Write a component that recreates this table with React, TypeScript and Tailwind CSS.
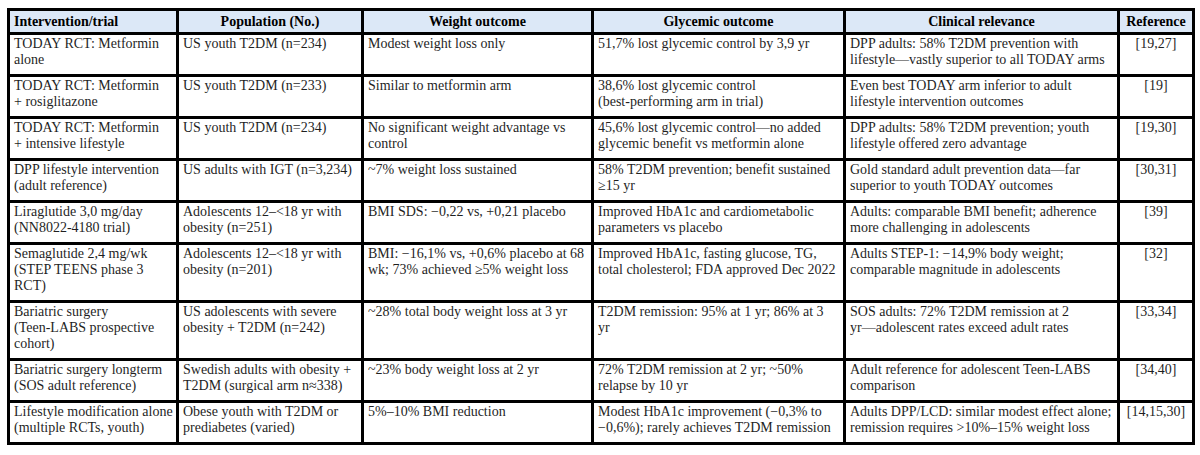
const headers = [
  "Intervention/trial",
  "Population (No.)",
  "Weight outcome",
  "Glycemic outcome",
  "Clinical relevance",
  "Reference",
];

const colWidths = ["w-[169px]", "w-[185px]", "w-[230px]", "w-[252px]", "w-[274px]", "w-[75px]"];

// each cell is a list of lines, broken where the source table breaks them
const rows: string[][][] = [
  [
    ["TODAY RCT: Metformin", "alone"],
    ["US youth T2DM (n=234)"],
    ["Modest weight loss only"],
    ["51,7% lost glycemic control by 3,9 yr"],
    ["DPP adults: 58% T2DM prevention with", "lifestyle—vastly superior to all TODAY arms"],
    ["[19,27]"],
  ],
  [
    ["TODAY RCT: Metformin", "+ rosiglitazone"],
    ["US youth T2DM (n=233)"],
    ["Similar to metformin arm"],
    ["38,6% lost glycemic control", "(best-performing arm in trial)"],
    ["Even best TODAY arm inferior to adult", "lifestyle intervention outcomes"],
    ["[19]"],
  ],
  [
    ["TODAY RCT: Metformin", "+ intensive lifestyle"],
    ["US youth T2DM (n=234)"],
    ["No significant weight advantage vs", "control"],
    ["45,6% lost glycemic control—no added", "glycemic benefit vs metformin alone"],
    ["DPP adults: 58% T2DM prevention; youth", "lifestyle offered zero advantage"],
    ["[19,30]"],
  ],
  [
    ["DPP lifestyle intervention", "(adult reference)"],
    ["US adults with IGT (n=3,234)"],
    ["~7% weight loss sustained"],
    ["58% T2DM prevention; benefit sustained", "≥15 yr"],
    ["Gold standard adult prevention data—far", "superior to youth TODAY outcomes"],
    ["[30,31]"],
  ],
  [
    ["Liraglutide 3,0 mg/day", "(NN8022-4180 trial)"],
    ["Adolescents 12–<18 yr with", "obesity (n=251)"],
    ["BMI SDS: −0,22 vs, +0,21 placebo"],
    ["Improved HbA1c and cardiometabolic", "parameters vs placebo"],
    ["Adults: comparable BMI benefit; adherence", "more challenging in adolescents"],
    ["[39]"],
  ],
  [
    ["Semaglutide 2,4 mg/wk", "(STEP TEENS phase 3", "RCT)"],
    ["Adolescents 12–<18 yr with", "obesity (n=201)"],
    ["BMI: −16,1% vs, +0,6% placebo at 68", "wk; 73% achieved ≥5% weight loss"],
    ["Improved HbA1c, fasting glucose, TG,", "total cholesterol; FDA approved Dec 2022"],
    ["Adults STEP-1: −14,9% body weight;", "comparable magnitude in adolescents"],
    ["[32]"],
  ],
  [
    ["Bariatric surgery", "(Teen-LABS prospective", "cohort)"],
    ["US adolescents with severe", "obesity + T2DM (n=242)"],
    ["~28% total body weight loss at 3 yr"],
    ["T2DM remission: 95% at 1 yr; 86% at 3", "yr"],
    ["SOS adults: 72% T2DM remission at 2", "yr—adolescent rates exceed adult rates"],
    ["[33,34]"],
  ],
  [
    ["Bariatric surgery longterm", "(SOS adult reference)"],
    ["Swedish adults with obesity +", "T2DM (surgical arm n≈338)"],
    ["~23% body weight loss at 2 yr"],
    ["72% T2DM remission at 2 yr; ~50%", "relapse by 10 yr"],
    ["Adult reference for adolescent Teen-LABS", "comparison"],
    ["[34,40]"],
  ],
  [
    ["Lifestyle modification alone", "(multiple RCTs, youth)"],
    ["Obese youth with T2DM or", "prediabetes (varied)"],
    ["5%–10% BMI reduction"],
    ["Modest HbA1c improvement (−0,3% to", "−0,6%); rarely achieves T2DM remission"],
    ["Adults DPP/LCD: similar modest effect alone;", "remission requires >10%–15% weight loss"],
    ["[14,15,30]"],
  ],
];

export default function App() {
  return (
    <div className="w-[1200px] h-[455px] bg-white pl-[7px] pt-[8px] font-['Liberation_Serif',serif] text-[14px] leading-[16px] text-[#1f1f1f]">
      <table className="border-collapse table-fixed w-[1187px]">
        <colgroup>
          {colWidths.map((w, i) => (
            <col key={i} className={w} />
          ))}
        </colgroup>
        <thead>
          <tr className="bg-[#dce8f7]">
            {headers.map((h, i) => (
              <th
                key={h}
                className={
                  "border-[3px] border-solid border-black px-[4px] pt-[3px] pb-[2px] font-bold text-black " +
                  (i === 0 ? "text-left" : "text-center")
                }
              >
                {h}
              </th>
            ))}
          </tr>
        </thead>
        <tbody>
          {rows.map((row, r) => (
            <tr key={r}>
              {row.map((lines, c) => (
                <td
                  key={c}
                  className={
                    "border-[3px] border-solid border-black px-[4px] pt-[1px] pb-[6px] align-top whitespace-nowrap " +
                    (c === 5 ? "text-center" : "text-left")
                  }
                >
                  {lines.map((line, k) => (
                    <span key={k}>
                      {k > 0 && <br />}
                      {line}
                    </span>
                  ))}
                </td>
              ))}
            </tr>
          ))}
        </tbody>
      </table>
    </div>
  );
}
